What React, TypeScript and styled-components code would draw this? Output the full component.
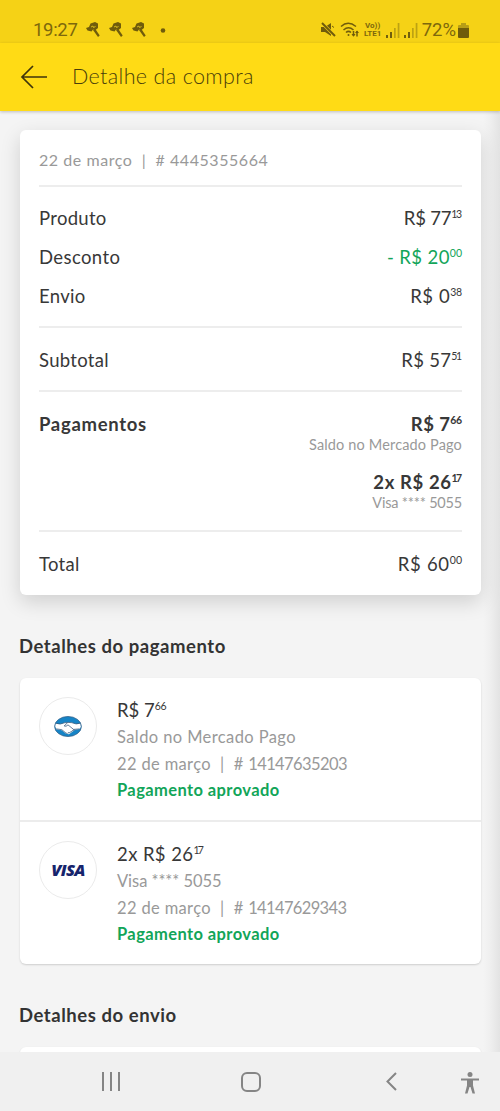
import React from 'react';
import styled, { createGlobalStyle } from 'styled-components';

const Global = createGlobalStyle`
  * { box-sizing: border-box; }
  body { margin: 0; background: #f4f4f4; font-family: Lato, 'Open Sans', sans-serif; color: #333; }
`;

const Screen = styled.div`
  height: 1111px;
  display: flex;
  flex-direction: column;
  overflow: hidden;
`;

const StatusBar = styled.div`
  height: 43px;
  flex: none;
  background: #f5d216;
  color: #7d680c;
  padding: 17px 31px 0 33px;
  display: flex;
  align-items: center;
  justify-content: space-between;
  font: 18.5px/24px Roboto, sans-serif;
`;

const StatusGroup = styled.div<{ $gap: number }>`
  display: flex;
  align-items: center;
  gap: ${p => p.$gap}px;
  svg { display: block; }
`;

const Clock = styled.span`
  letter-spacing: -0.3px;
`;

const Header = styled.header`
  height: 68px;
  flex: none;
  background: #ffdb15;
  box-shadow: 0 1px 3px rgba(0, 0, 0, 0.22);
  display: flex;
  align-items: center;
  padding-left: 20px;
  gap: 24px;
  z-index: 1;
`;

const Title = styled.h1`
  margin: 0 0 2px;
  font-size: 21.5px;
  font-weight: 300;
  line-height: 28px;
  color: #4a3e0a;
  letter-spacing: 0.35px;
`;

const Content = styled.main`
  flex: 1;
  min-height: 0;
  overflow: hidden;
  padding: 19px 19px 0 20px;
  background: linear-gradient(90deg, #f4f4f4 483px, #efefef 490px, #e3e3e3 100%);
`;

const Summary = styled.section`
  height: 465px;
  background: #fff;
  border-radius: 6px;
  box-shadow: 0 7px 20px rgba(0, 0, 0, 0.15);
  padding: 0 19px;
`;

const Block = styled.div<{ $height: number; $pad: number; $last?: boolean }>`
  height: ${p => p.$height}px;
  padding-top: ${p => p.$pad}px;
  border-bottom: ${p => (p.$last ? 'none' : '2px solid #ededed')};
`;

const Line = styled.div`
  display: flex;
  justify-content: space-between;
  height: 39px;
`;

const Text = styled.div<{ $size?: number; $track?: number; $tone?: 'muted' | 'green'; $bold?: boolean; $lh?: number }>`
  font-size: ${p => p.$size ?? 18.5}px;
  line-height: ${p => p.$lh ?? 26}px;
  letter-spacing: ${p => p.$track ?? 0.3}px;
  font-weight: ${p => (p.$bold ? 700 : 400)};
  color: ${p => (p.$tone === 'muted' ? '#999' : p.$tone === 'green' ? '#12a559' : '#383838')};
  white-space: nowrap;
`;

const Cents = styled.span<{ $track?: number }>`
  font-size: 10.5px;
  line-height: 0;
  vertical-align: 7px;
  letter-spacing: ${p => p.$track ?? 0}px;
  margin-right: ${p => -(p.$track ?? 0)}px;
`;

const Digits = styled.span<{ $track: number }>`
  letter-spacing: ${p => p.$track}px;
`;

const Payments = styled.div`
  display: flex;
  flex-direction: column;
  gap: 16px;
`;

const PaymentSource = styled.div`
  display: flex;
  flex-direction: column;
  align-items: flex-end;
`;

const SectionTitle = styled.h2`
  margin: 38px 0 19px -1px;
  font-size: 18.5px;
  font-weight: 700;
  line-height: 26px;
  letter-spacing: 0.55px;
`;

const Card = styled.section`
  background: #fff;
  border-radius: 6px;
  box-shadow: 0 1px 2px rgba(0, 0, 0, 0.16);
  min-height: 50px;
`;

const Payment = styled.article<{ $divided?: boolean }>`
  display: flex;
  gap: 20px;
  height: ${p => (p.$divided ? 144 : 142)}px;
  padding: 19px 19px 0;
  border-bottom: ${p => (p.$divided ? '2px solid #ececec' : 'none')};
`;

const Badge = styled.div`
  width: 58px;
  height: 58px;
  flex: none;
  border: 1px solid #ebebeb;
  border-radius: 50%;
  display: flex;
  align-items: center;
  justify-content: center;
`;

const Visa = styled.span`
  font: italic 800 16.5px/20px 'Open Sans', sans-serif;
  letter-spacing: -0.7px;
  color: #16246c;
`;

const NavBar = styled.nav`
  height: 59px;
  flex: none;
  background: #f0f0f0;
  padding-left: 82px;
  display: grid;
  grid-template-columns: 58px 222px 58px 1fr;
  align-items: center;
  justify-items: center;
  svg { display: block; }
  svg:last-child { margin: 2px 0 0 20px; }
`;

const Hammer = () => (
  <svg width="15" height="16" viewBox="0 0 15 16" fill="#705c0b">
    <path d="M0 6 3 5l1.500-3.500L9 0l3 1.500V6L9.500 8 7 7.500 5.500 9.500 1.500 8.500z" />
    <path d="m7 8 2-1.500 4.700 7-1.700 1.500z" />
    <path d="m5 5 2-1 .5 1.500 2-1" fill="none" stroke="#d7b91b" />
  </svg>
);

const Signal = () => (
  <svg width="14" height="15" viewBox="0 0 14 15" fill="#715f0e">
    <path d="M0 12h2v3H0zM4 9h2v6H4z" />
    <path d="M8 5h1.700v10H8zM11.700 0h1.700v15h-1.700z" opacity=".42" />
  </svg>
);

const StatusIcons = () => (
  <>
    <svg width="15" height="16" viewBox="0 0 15 16" fill="#705c0b">
      <path d="M0 5h4l6-4v13l-6-4H0z" />
      <path d="m1 1 13 13" stroke="#f5d216" strokeWidth="3.200" />
      <path d="m1 1 13 13" stroke="#705c0b" strokeWidth="2" />
      <path d="m11 4 2 1.500" stroke="#705c0b" />
    </svg>
    <svg width="20" height="16" viewBox="0 0 20 16" fill="none" stroke="#705c0b" strokeWidth="1.500">
      <path d="M1 4.500Q8-2 16 4.500M3.500 8q5-4.500 10 0M6 10.500q2.500-2.300 5 0" />
      <circle cx="8.500" cy="13" r="1" fill="#705c0b" stroke="none" />
      <path d="M13.500 9v5M17 14.500V9" />
      <path d="m11.500 12 2 2.800 2-2.800zM15 11l2-2.500 2 2.500z" fill="#705c0b" stroke="none" />
    </svg>
  </>
);

const Volte = styled.div`
  font: 700 8px/8px Roboto, sans-serif;
  width: 18px;
  white-space: nowrap;
  display: flex;
  flex-direction: column;
  align-items: center;
`;

const Handshake = () => (
  <svg width="28" height="21" viewBox="0 0 29 22">
    <ellipse cx="14.500" cy="11" rx="14" ry="10.500" fill="#1684c6" />
    <path d="M1.200 7.500q5 2 9.300-.3l4-.7 4 .3q4.500 2.500 9.300.7.800 4-.8 6.200l-5 .8-6.500 4.500-3-.5-4.500-3.500-6-1q-1.800-3-.8-6.500z" fill="#fff" />
    <path d="M1.500 7.500q5 2 9-.3l4-.5 4 .3q4.500 2.300 9 .5M10.500 10.500l3.500-3.500M10.500 10.500q2 1 4-1.200l7 5.700M2 13.500l6 .8 4.500 3.700q1.500.8 2-.5 1.700.7 2.200-.7 2 .2 2-1.300 2.500 0 2-1.500l6.200-.5" fill="none" stroke="#36587b" strokeWidth=".8" />
    <ellipse cx="14.500" cy="11" rx="14" ry="10.500" fill="none" stroke="#315e87" strokeWidth=".8" />
  </svg>
);

export default function App() {
  return (
    <>
      <Global />
      <Screen>
        <StatusBar>
          <StatusGroup $gap={8}>
            <Clock>19:27</Clock>
            <Hammer /><Hammer /><Hammer />
            <svg width="16" height="5" viewBox="0 0 16 5"><circle cx="8" cy="2.500" r="2.300" fill="#705c0b" /></svg>
          </StatusGroup>
          <StatusGroup $gap={4}>
            <StatusIcons />
            <Volte><span>Vo))</span><span>LTE1</span></Volte>
            <Signal /><Signal />
            <StatusGroup $gap={2}>
              <span>72%</span>
              <svg width="11" height="15" viewBox="0 0 11 15"><path d="M3 0h5v2h2q1 0 1 1v2H0V3q0-1 1-1h2z" fill="#b79d16" /><path d="M0 5h11v9q0 1-1 1H1q-1 0-1-1z" fill="#705c0b" /></svg>
            </StatusGroup>
          </StatusGroup>
        </StatusBar>
        <Header>
          <svg width="28" height="24" viewBox="0 0 28 24" fill="none" stroke="#3f350b" strokeWidth="1.700"><path d="M27 12H2M13 1 2 12l11 11" /></svg>
          <Title>Detalhe da compra</Title>
        </Header>
        <Content>
          <Summary>
            <Block $height={57} $pad={18}>
              <Text $size={16} $tone="muted" $track={0.55} $lh={24}>22 de março &nbsp;|&nbsp; # <Digits $track={0.55}>4445355664</Digits></Text>
            </Block>
            <Block $height={141} $pad={18}>
              <Line><Text>Produto</Text><Text $track={-0.2}>R$ 77<Cents $track={-1.5}>13</Cents></Text></Line>
              <Line><Text $track={0.4}>Desconto</Text><Text $tone="green" $track={0.4}>- R$ 20<Cents>00</Cents></Text></Line>
              <Line><Text>Envio</Text><Text $track={0.6}>R$ 0<Cents $track={-0.5}>38</Cents></Text></Line>
            </Block>
            <Block $height={64} $pad={19}>
              <Line><Text>Subtotal</Text><Text $track={0.3}>R$ 57<Cents $track={-1.5}>51</Cents></Text></Line>
            </Block>
            <Block $height={140} $pad={19}>
              <Line>
                <Text $bold $track={0.7}>Pagamentos</Text>
                <Payments>
                  <PaymentSource>
                    <Text $bold $track={0.4}>R$ 7<Cents $track={-0.5}>66</Cents></Text>
                    <Text $size={14.5} $tone="muted" $lh={16} $track={0.15}>Saldo no Mercado Pago</Text>
                  </PaymentSource>
                  <PaymentSource>
                    <Text $bold $track={0.6}>2x R$ 26<Cents $track={-1.8}>17</Cents></Text>
                    <Text $size={14.5} $tone="muted" $lh={16} $track={-0.2}>Visa **** 5055</Text>
                  </PaymentSource>
                </Payments>
              </Line>
            </Block>
            <Block $height={63} $pad={19} $last>
              <Line><Text>Total</Text><Text $track={0.7}>R$ 60<Cents>00</Cents></Text></Line>
            </Block>
          </Summary>
          <SectionTitle>Detalhes do pagamento</SectionTitle>
          <Card>
            <Payment $divided>
              <Badge><Handshake /></Badge>
              <div>
                <Text $track={0}>R$ 7<Cents $track={-0.5}>66</Cents></Text>
                <Text $size={16.5} $tone="muted" $lh={28} $track={0.4}>Saldo no Mercado Pago</Text>
                <Text $size={16.5} $tone="muted" $lh={26} $track={0.35}>22 de março &nbsp;|&nbsp; # <Digits $track={-0.6}>14147635203</Digits></Text>
                <Text $size={16.5} $tone="green" $bold $lh={27} $track={0.4}>Pagamento aprovado</Text>
              </div>
            </Payment>
            <Payment>
              <Badge><Visa>VISA</Visa></Badge>
              <div>
                <Text $track={0.4}>2x R$ 26<Cents $track={-1.8}>17</Cents></Text>
                <Text $size={16.5} $tone="muted" $lh={28} $track={-0.05}>Visa **** 5055</Text>
                <Text $size={16.5} $tone="muted" $lh={26} $track={0.35}>22 de março &nbsp;|&nbsp; # <Digits $track={-0.65}>14147629343</Digits></Text>
                <Text $size={16.5} $tone="green" $bold $lh={27} $track={0.4}>Pagamento aprovado</Text>
              </div>
            </Payment>
          </Card>
          <SectionTitle>Detalhes do envio</SectionTitle>
          <Card />
        </Content>
        <NavBar>
          <svg width="18" height="19" viewBox="0 0 18 19" stroke="#858585" strokeWidth="2"><path d="M1 0v19M9 0v19M17 0v19" /></svg>
          <svg width="20" height="20" viewBox="0 0 20 20"><rect x="1" y="1" width="18" height="18" rx="5" fill="none" stroke="#858585" strokeWidth="2" /></svg>
          <svg width="11" height="19" viewBox="0 0 11 19" fill="none" stroke="#858585" strokeWidth="2"><path d="M10 1 1.500 9.500 10 18" /></svg>
          <svg width="18" height="22" viewBox="0 0 18 22" fill="#858585"><circle cx="9" cy="2.500" r="2.500" /><path d="M0 6.500h18v2h-6v5l2 8h-2.500L9.500 15h-1l-2 6.500H4l2-8v-5H0z" /></svg>
        </NavBar>
      </Screen>
    </>
  );
}
